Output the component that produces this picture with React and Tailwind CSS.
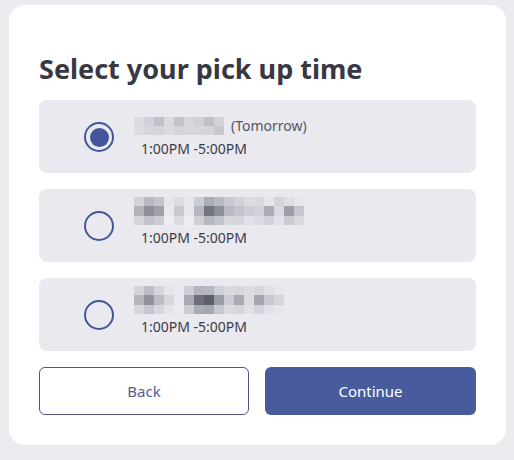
const rowsA = [
  ["#dcdce3", "#d2d2da", "#c0c0c9", "#d9d9e0", "#c3c3cb", "#d6d6dd", "#d0d0d7", "#c0c0ca", "#d3d3da"],
  ["#dcdce3", "#d6d6dd", "#d4d4db", "#dadae0", "#d4d4db", "#d6d6dd", "#d6d6dd", "#d4d4db", "#c8c8cf"],
];

const rowsB = [
  ["#d2d2da", "#b9b9c2", "#c4c4cc", "#e6e6ec", "#dcdce3", "#e6e6ec", "#cdcdd4", "#acaeb7", "#b9b9c2", "#c9c9d1", "#d2d2da", "#dcdce2", "#d9d9e0", "#e6e6ec", "#d3d3db", "#dfdfe5", "#e6e6ec"],
  ["#b3b3bc", "#8f8f9b", "#a0a0ab", "#e8e8ee", "#c9c9d1", "#e6e6ec", "#b6b6c0", "#717682", "#8b8f9a", "#b9b9c4", "#c4c4cd", "#cdcdd5", "#d1d1d9", "#adadb8", "#d9d9e0", "#9e9eaa", "#c6c6ce"],
  ["#d4d4db", "#c3c3cb", "#cbcbd2", "#eeeef4", "#dcdce2", "#ececf1", "#cfcfd6", "#b6b8c0", "#c2c4cc", "#d6d6dd", "#d4d4dc", "#e0e0e6", "#dcdce2", "#d2d2da", "#e2e2e8", "#cacad2", "#d8d8df"],
];

const rowsC = [
  ["#d3d3da", "#bdbdc6", "#d4d4db", "#e4e4ea", "#e9e9ee", "#cdcdd5", "#b4b4be", "#b7b7c1", "#cfcfd7", "#d9d9e0", "#d6d6dd", "#dcdce2", "#d6d6de", "#e0e0e6", "#e6e6ec"],
  ["#b6b6bf", "#92929d", "#bdbdc6", "#d6d6dd", "#e8e8ee", "#a9a9b4", "#6c6e7b", "#5b5d6a", "#9a9ca8", "#cbcbd3", "#a9a9b3", "#dcd9df", "#a7a3b0", "#c8c8d0", "#d6d6de"],
  ["#d6d6dd", "#c6c6ce", "#d7d7de", "#e4e4ea", "#eaeaef", "#cbcbd2", "#a9abb5", "#a4a6b0", "#c6c8cf", "#dadae0", "#d6d6dd", "#e2e0e6", "#d5d3db", "#e2e2e8", "#e6e6ec"],
];

function Pixels({ rows, h }) {
  return (
    <div className="flex flex-col">
      {rows.map((row, i) => (
        <div key={i} className="flex">
          {row.map((c, j) => (
            <div key={j} className="w-[10px]" style={{ height: h, backgroundColor: c }} />
          ))}
        </div>
      ))}
    </div>
  );
}

function Radio({ checked }) {
  return (
    <div className="w-[30px] h-[30px] rounded-full border-2 border-[#43569a] flex items-center justify-center shrink-0">
      {checked && <div className="w-[19px] h-[19px] rounded-full bg-[#43569a]" />}
    </div>
  );
}

function Option({ checked, rows, tomorrow }) {
  return (
    <div className="h-[73px] rounded-lg bg-[#e9e9ef] flex pl-[45px]">
      <div className="pt-[22px]">
        <Radio checked={checked} />
      </div>
      <div className="ml-[20px] flex flex-col">
        <div className="h-[39px] flex items-end">
          <div className="flex items-center mb-[3px]">
            <Pixels rows={rows} h={tomorrow ? 9 : 9.5} />
            {tomorrow && (
              <span className="ml-[7px] text-[14px] leading-5 text-[#555560]">(Tomorrow)</span>
            )}
          </div>
        </div>
        <div className="ml-[7px] text-[14px] leading-5 text-[#3c3c46]">1:00PM -5:00PM</div>
      </div>
    </div>
  );
}

export default function App() {
  return (
    <div className="min-h-screen w-[514px] h-[460px] bg-[#ebebf0] pt-[5px] pl-[9px] font-['Noto_Sans',sans-serif]">
      <div className="w-[497px] h-[440px] bg-white rounded-2xl px-[30px] pt-[46px]">
        <h1 className="text-[27px] leading-9 font-bold text-[#383843] mb-[13px]">
          Select your pick up time
        </h1>
        <div className="flex flex-col gap-4">
          <Option checked rows={rowsA} tomorrow />
          <Option rows={rowsB} />
          <Option rows={rowsC} />
        </div>
        <div className="flex gap-4 mt-4">
          <button className="w-[210px] h-[48px] rounded-md border border-[#4c5583] bg-white text-[15px] text-[#555d90]">
            Back
          </button>
          <button className="flex-1 h-[48px] rounded-md bg-[#485c9d] text-[15px] text-white">
            Continue
          </button>
        </div>
      </div>
    </div>
  );
}
